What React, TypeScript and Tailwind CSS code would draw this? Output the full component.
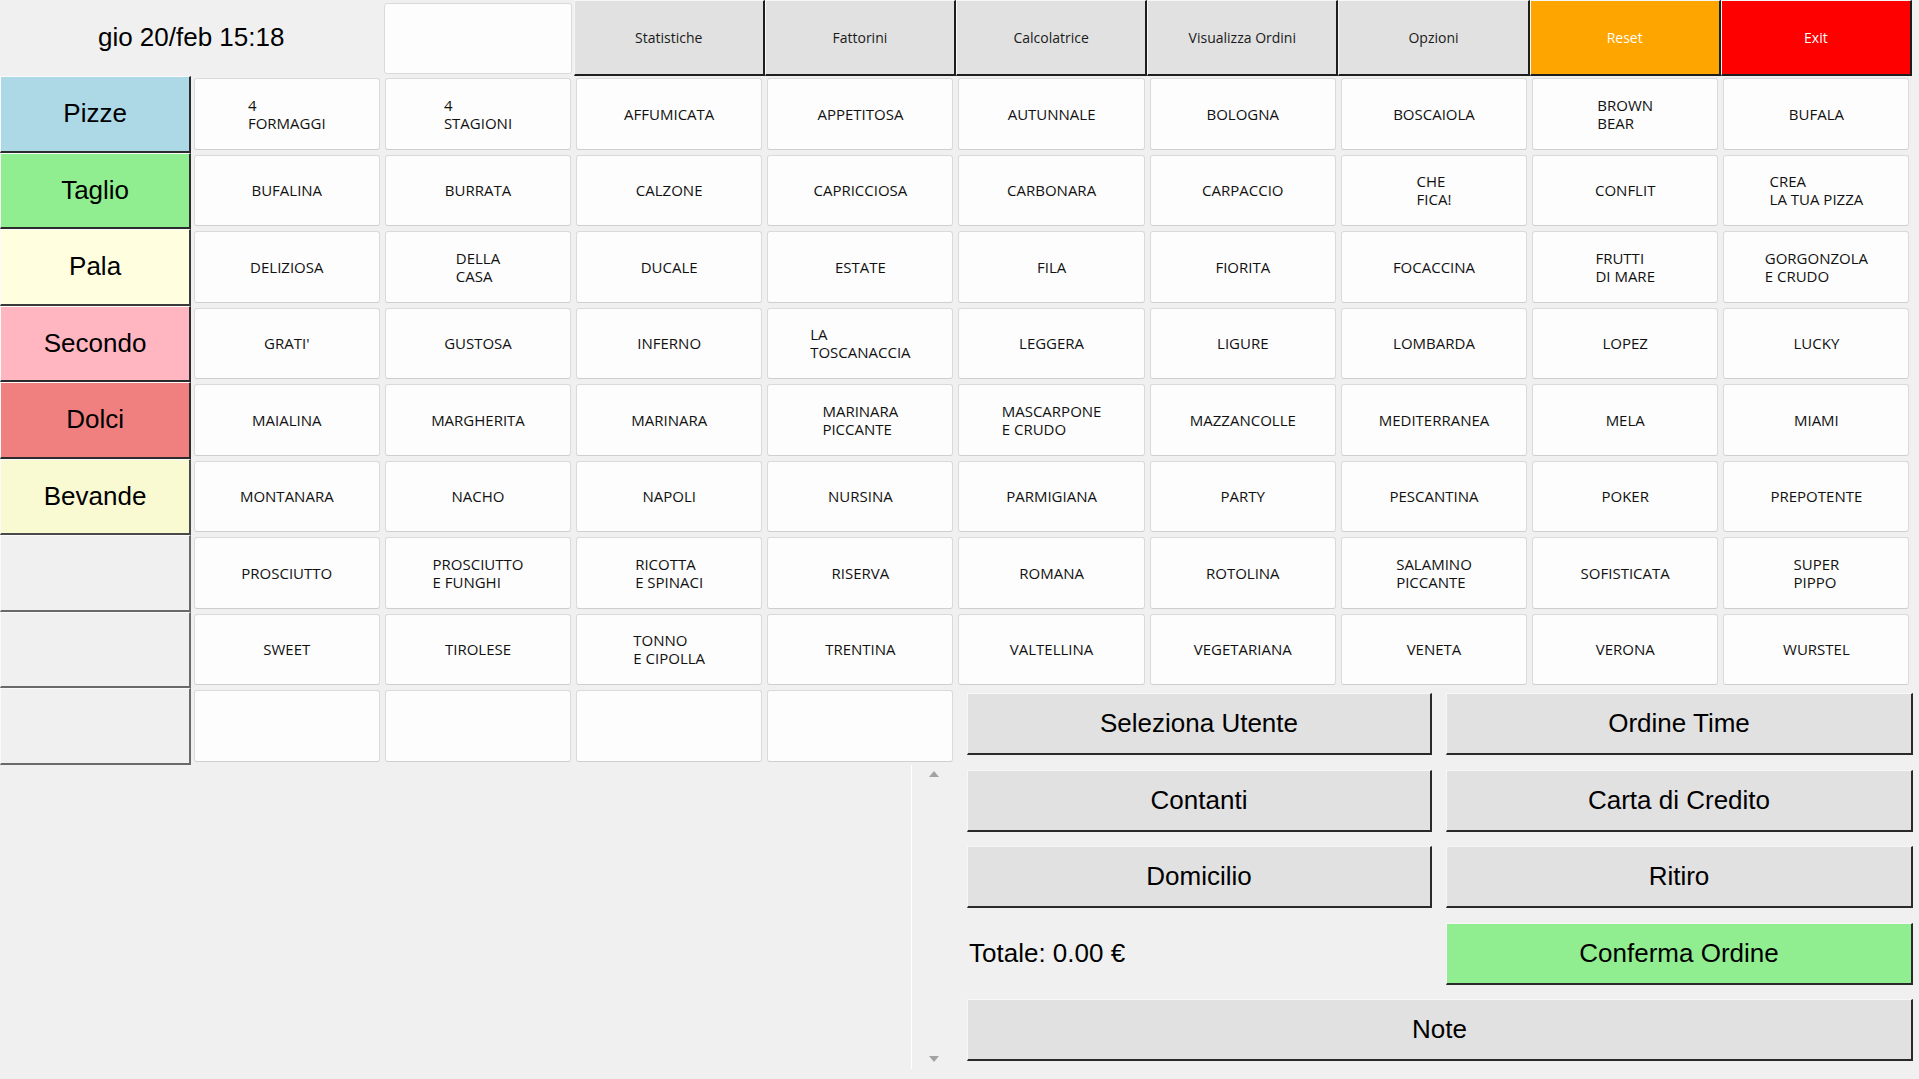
const CATEGORIES = [
  { label: 'Pizze', cls: 'bg-[#add8e6] border-r-[#2b2b2b] border-b-[#2b2b2b]' },
  { label: 'Taglio', cls: 'bg-[#90ee90] border-r-[#2b2b2b] border-b-[#2b2b2b]' },
  { label: 'Pala', cls: 'bg-[#ffffe0] border-r-[#3a3a3a] border-b-[#3a3a3a]' },
  { label: 'Secondo', cls: 'bg-[#ffb6c1] border-r-[#2b2b2b] border-b-[#2b2b2b]' },
  { label: 'Dolci', cls: 'bg-[#f08080] border-r-[#2b2b2b] border-b-[#2b2b2b]' },
  { label: 'Bevande', cls: 'bg-[#fafad2] border-r-[#4a4a4a] border-b-[#4a4a4a]' },
  { label: '', cls: 'bg-[#f0f0f0] border-r-[#6a6a6a] border-b-[#6a6a6a]' },
  { label: '', cls: 'bg-[#f0f0f0] border-r-[#6a6a6a] border-b-[#6a6a6a]' },
];

const PIZZE = [
  ['4\nFORMAGGI', '4\nSTAGIONI', 'AFFUMICATA', 'APPETITOSA', 'AUTUNNALE', 'BOLOGNA', 'BOSCAIOLA', 'BROWN\nBEAR', 'BUFALA'],
  ['BUFALINA', 'BURRATA', 'CALZONE', 'CAPRICCIOSA', 'CARBONARA', 'CARPACCIO', 'CHE\nFICA!', 'CONFLIT', 'CREA\nLA TUA PIZZA'],
  ['DELIZIOSA', 'DELLA\nCASA', 'DUCALE', 'ESTATE', 'FILA', 'FIORITA', 'FOCACCINA', 'FRUTTI\nDI MARE', 'GORGONZOLA\nE CRUDO'],
  ["GRATI'", 'GUSTOSA', 'INFERNO', 'LA\nTOSCANACCIA', 'LEGGERA', 'LIGURE', 'LOMBARDA', 'LOPEZ', 'LUCKY'],
  ['MAIALINA', 'MARGHERITA', 'MARINARA', 'MARINARA\nPICCANTE', 'MASCARPONE\nE CRUDO', 'MAZZANCOLLE', 'MEDITERRANEA', 'MELA', 'MIAMI'],
  ['MONTANARA', 'NACHO', 'NAPOLI', 'NURSINA', 'PARMIGIANA', 'PARTY', 'PESCANTINA', 'POKER', 'PREPOTENTE'],
  ['PROSCIUTTO', 'PROSCIUTTO\nE FUNGHI', 'RICOTTA\nE SPINACI', 'RISERVA', 'ROMANA', 'ROTOLINA', 'SALAMINO\nPICCANTE', 'SOFISTICATA', 'SUPER\nPIPPO'],
  ['SWEET', 'TIROLESE', 'TONNO\nE CIPOLLA', 'TRENTINA', 'VALTELLINA', 'VEGETARIANA', 'VENETA', 'VERONA', 'WURSTEL'],
];

const TOP_BUTTONS = [
  { label: 'Statistiche', cls: 'bg-[#e1e1e1] text-[#1a1a1a]' },
  { label: 'Fattorini', cls: 'bg-[#e1e1e1] text-[#1a1a1a]' },
  { label: 'Calcolatrice', cls: 'bg-[#e1e1e1] text-[#1a1a1a]' },
  { label: 'Visualizza Ordini', cls: 'bg-[#e1e1e1] text-[#1a1a1a]' },
  { label: 'Opzioni', cls: 'bg-[#e1e1e1] text-[#1a1a1a]' },
  { label: 'Reset', cls: 'bg-[#ffa500] text-white' },
  { label: 'Exit', cls: 'bg-[#ff0000] text-white' },
];

function ItemCell({ label }: { label: string }) {
  return (
    <div className="px-[2.5px] pt-[2px] pb-[3px]">
      <div className="flex h-full items-center justify-center rounded-[3px] border border-[#dadada] border-b-[#cfcfcf] bg-[#fdfdfd]">
        <span className="whitespace-pre-line text-left font-['Open_Sans',sans-serif] text-[15px] leading-[18px] text-[#111]">
          {label}
        </span>
      </div>
    </div>
  );
}

function CategoryCell({ label, cls }: { label: string; cls: string }) {
  return (
    <div
      className={`flex items-center justify-center border-t border-l border-t-[#fafafa] border-l-[#fafafa] border-r-2 border-b-2 text-[26px] text-black ${cls}`}
    >
      {label}
    </div>
  );
}

function BigButton({ label, cls = 'bg-[#e1e1e1]' }: { label: string; cls?: string }) {
  return (
    <button
      className={`flex h-[62px] items-center justify-center border-t border-l border-t-[#f7f7f7] border-l-[#f7f7f7] border-r-2 border-b-2 border-r-[#2a2a2a] border-b-[#2a2a2a] text-[26px] text-black ${cls}`}
    >
      {label}
    </button>
  );
}

export default function App() {
  return (
    <div className="h-[1079px] w-[1919px] overflow-hidden bg-[#f0f0f0] font-['Liberation_Sans',Arial,sans-serif]">
      {/* top bar */}
      <div className="grid h-[76px] w-[1912px] grid-cols-10">
        <div className="col-span-2 flex items-center justify-center pb-[1px] text-[26px] text-black">
          gio 20/feb 15:18
        </div>
        <div className="px-[2px] pt-[3px] pb-[2px]">
          <div className="h-full rounded-[3px] border border-[#dadada] bg-[#fdfdfd]" />
        </div>
        {TOP_BUTTONS.map((b) => (
          <button
            key={b.label}
            className={`flex items-center justify-center border-t border-l border-t-[#f7f7f7] border-l-[#f7f7f7] border-r-2 border-b-2 border-r-[#1e1e1e] border-b-[#1e1e1e] font-['Open_Sans',sans-serif] text-[14px] ${b.cls}`}
          >
            {b.label}
          </button>
        ))}
      </div>

      {/* menu grid */}
      <div className="grid w-[1912px] grid-cols-10 grid-rows-[repeat(8,76.5px)]">
        {PIZZE.map((row, r) => (
          <div key={r} className="contents">
            <CategoryCell label={CATEGORIES[r].label} cls={CATEGORIES[r].cls} />
            {row.map((p) => (
              <ItemCell key={p} label={p} />
            ))}
          </div>
        ))}
      </div>

      {/* bottom */}
      <div className="flex w-[1912px]">
        <div className="w-[956px]">
          <div className="grid h-[76.5px] grid-cols-5">
            <CategoryCell label="" cls="bg-[#f0f0f0] border-r-[#6a6a6a] border-b-[#6a6a6a]" />
            <ItemCell label="" />
            <ItemCell label="" />
            <ItemCell label="" />
            <ItemCell label="" />
          </div>
          <div className="flex h-[304px]">
            <div className="w-[912px] border-r border-r-white" />
            <div className="flex flex-1 flex-col items-center justify-between pt-[6px] pb-[7px]">
              <svg width="10" height="6" viewBox="0 0 10 6">
                <path d="M5 0 L10 6 L0 6 Z" fill="#a3a3a3" />
              </svg>
              <svg width="10" height="6" viewBox="0 0 10 6">
                <path d="M0 0 L10 0 L5 6 Z" fill="#a3a3a3" />
              </svg>
            </div>
          </div>
        </div>
        <div className="w-[956px] pl-[11px] pt-[5px]">
          <div className="grid grid-cols-[465px_467px] gap-x-[14px] gap-y-[14.5px]">
            <BigButton label="Seleziona Utente" />
            <BigButton label="Ordine Time" />
            <BigButton label="Contanti" />
            <BigButton label="Carta di Credito" />
            <BigButton label="Domicilio" />
            <BigButton label="Ritiro" />
            <div className="flex h-[62px] items-center pl-[2px] text-[26px] text-black">Totale: 0.00 €</div>
            <BigButton label="Conferma Ordine" cls="bg-[#90ee90]" />
            <div className="col-span-2">
              <BigButton label="Note" cls="bg-[#e1e1e1] w-full" />
            </div>
          </div>
        </div>
      </div>
    </div>
  );
}
